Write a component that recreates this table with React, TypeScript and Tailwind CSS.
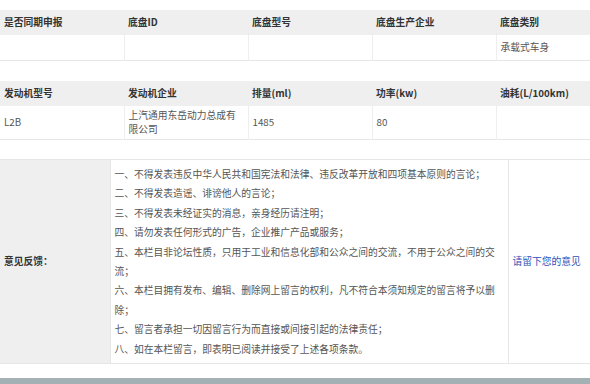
import React from "react";

const font = { fontFamily: '"Noto Sans CJK SC", "Noto Sans", sans-serif' };

const chassisHead = ["是否同期申报", "底盘ID", "底盘型号", "底盘生产企业", "底盘类别"];
const chassisRow = ["", "", "", "", "承载式车身"];

const engineHead = ["发动机型号", "发动机企业", "排量(ml)", "功率(kw)", "油耗(L/100km)"];

const rules = [
  "一、不得发表违反中华人民共和国宪法和法律、违反改革开放和四项基本原则的言论；",
  "二、不得发表造谣、诽谤他人的言论；",
  "三、不得发表未经证实的消息，亲身经历请注明；",
  "四、请勿发表任何形式的广告，企业推广产品或服务；",
  "五、本栏目非论坛性质，只用于工业和信息化部和公众之间的交流，不用于公众之间的交",
  "流；",
  "六、本栏目拥有发布、编辑、删除网上留言的权利，凡不符合本须知规定的留言将予以删",
  "除；",
  "七、留言者承担一切因留言行为而直接或间接引起的法律责任；",
  "八、如在本栏留言，即表明已阅读并接受了上述各项条款。",
];

function Cols() {
  return (
    <colgroup>
      <col className="w-[124px]" />
      <col className="w-[124px]" />
      <col className="w-[124px]" />
      <col className="w-[124px]" />
      <col className="w-[124px]" />
    </colgroup>
  );
}

export default function App() {
  return (
    <div className="relative h-[384px] w-[590px] overflow-hidden bg-white text-[9.75px]" style={font}>
      <div className="pt-[10px]">
        <table className="w-[620px] table-fixed border-collapse">
          <Cols />
          <thead>
            <tr className="h-[25px] bg-[#efefef]">
              {chassisHead.map((h) => (
                <th key={h} className="px-[4px] text-left font-bold text-[#333]">
                  {h}
                </th>
              ))}
            </tr>
          </thead>
          <tbody>
            <tr className="h-[25px] border-b border-[#e6e6e6]">
              {chassisRow.map((c, i) => (
                <td key={i} className="border-l border-[#eeeeee] px-[4px] text-[#555] first:border-l-0">
                  {c}
                </td>
              ))}
            </tr>
          </tbody>
        </table>
      </div>

      <div className="pt-[20px]">
        <table className="w-[620px] table-fixed border-collapse">
          <Cols />
          <thead>
            <tr className="h-[25px] bg-[#efefef]">
              {engineHead.map((h) => (
                <th key={h} className="px-[4px] text-left font-bold text-[#333]">
                  {h}
                </th>
              ))}
            </tr>
          </thead>
          <tbody>
            <tr className="h-[34px] border-b border-[#e6e6e6] text-[#555]">
              <td className="px-[4px]">L2B</td>
              <td className="border-l border-[#eeeeee] px-[4px] leading-[14px]">
                上汽通用东岳动力总成有
                <br />
                限公司
              </td>
              <td className="border-l border-[#eeeeee] px-[4px]">1485</td>
              <td className="border-l border-[#eeeeee] px-[4px]">80</td>
              <td className="border-l border-[#eeeeee] px-[4px]"></td>
            </tr>
          </tbody>
        </table>
      </div>

      <div className="pt-[19px]">
        <table className="w-[620px] table-fixed border-collapse">
          <colgroup>
            <col className="w-[110px]" />
            <col className="w-[398px]" />
            <col className="w-[112px]" />
          </colgroup>
          <tbody>
            <tr className="border-y border-[#e6e6e6]">
              <td className="bg-[#efefef] px-[4px] align-middle font-bold text-[#333]">意见反馈：</td>
              <td className="border-l border-[#e6e6e6] px-[4px] pt-[5px] pb-[4px] leading-[19.4px] text-[#555]">
                {rules.map((r, i) => (
                  <div key={i} className="whitespace-nowrap">
                    {r}
                  </div>
                ))}
              </td>
              <td className="border-l border-[#e6e6e6] px-[4px] align-middle text-[#2d52b8]">请留下您的意见</td>
            </tr>
          </tbody>
        </table>
      </div>

      <div className="absolute bottom-0 left-0 h-[6px] w-full bg-[#a3b0b4]" />
    </div>
  );
}
